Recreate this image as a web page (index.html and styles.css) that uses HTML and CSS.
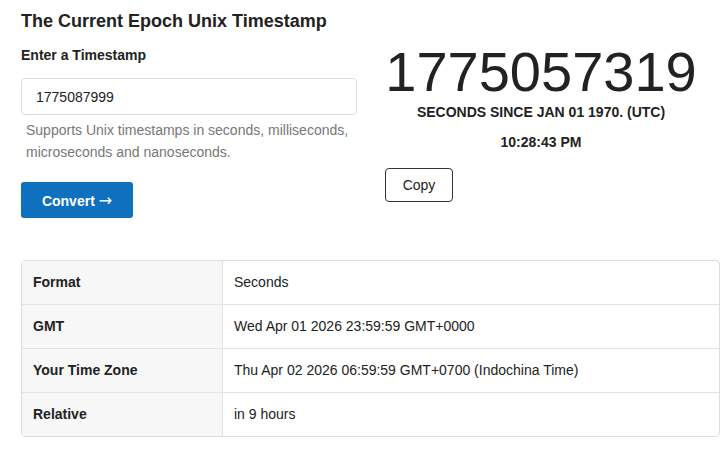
FILE: index.html
```html
<!DOCTYPE html>
<html lang="en">
<head>
  <meta charset="UTF-8" />
  <meta name="viewport" content="width=device-width, initial-scale=1.0"/>
  <title>Epoch Converter</title>
  <link rel="stylesheet" href="styles.css">
</head>
<body>
  <div class="page">
    <div class="top">
      <div class="converter">
        <h1>The Current Epoch Unix Timestamp</h1>
        <label class="label" for="ts">Enter a Timestamp</label>
        <input class="ts-input" id="ts" type="text" value="1775087999">
        <p class="help">Supports Unix timestamps in seconds, milliseconds, microseconds and nanoseconds.</p>
        <button class="convert">Convert <span class="arrow">&rarr;</span></button>
      </div>

      <div class="now">
        <div class="epoch">1775057319</div>
        <div class="since">SECONDS SINCE JAN 01 1970. (UTC)</div>
        <div class="clock">10:28:43 PM</div>
        <button class="copy">Copy</button>
      </div>
    </div>

    <table class="result">
      <tr>
        <th>Format</th>
        <td>Seconds</td>
      </tr>
      <tr>
        <th>GMT</th>
        <td>Wed Apr 01 2026 23:59:59 GMT+0000</td>
      </tr>
      <tr>
        <th>Your Time Zone</th>
        <td>Thu Apr 02 2026 06:59:59 GMT+0700 (Indochina Time)</td>
      </tr>
      <tr>
        <th>Relative</th>
        <td>in 9 hours</td>
      </tr>
    </table>
  </div>
</body>
</html>
```

FILE: styles.css
```css
* {
  box-sizing: border-box;
  font-family: 'Liberation Sans', Arial, sans-serif;
}
body {
  margin: 0;
  background: #fff;
  color: #222;
}
.page {
  padding: 10px 4px 0 21px;
}
.top {
  display: flex;
  gap: 28px;
}
.converter {
  width: 336px;
}
h1 {
  font-size: 18px;
  margin: 0 0 14px 0;
  line-height: 22px;
}
.label {
  display: block;
  font-size: 14px;
  font-weight: bold;
  line-height: 18px;
  margin-bottom: 14px;
}
.ts-input {
  display: block;
  width: 100%;
  height: 37px;
  padding: 0 14px;
  font-size: 14px;
  color: #222;
  border: 1px solid #ddd;
  border-radius: 4px;
}
.help {
  margin: 4px 0 19px 5px;
  font-size: 14px;
  line-height: 22px;
  color: #777;
}
.convert {
  width: 112px;
  height: 36px;
  background: #0f70bd;
  color: #fff;
  font-size: 14px;
  font-weight: bold;
  border: none;
  border-radius: 3px;
  cursor: pointer;
}
.arrow {
  font-family: 'DejaVu Sans', sans-serif;
  font-weight: normal;
  font-size: 16px;
}
.now {
  width: 312px;
  padding-top: 34px;
}
.epoch {
  text-align: center;
  font-size: 56px;
  line-height: 56px;
  color: #222;
}
.since, .clock {
  text-align: center;
  font-size: 14px;
  font-weight: bold;
}
.since {
  margin-top: 4px;
}
.clock {
  margin-top: 14px;
}
.copy {
  margin-top: 18px;
  width: 68px;
  height: 34px;
  background: #fff;
  border: 1px solid #333;
  border-radius: 4px;
  font-size: 14px;
  color: #222;
  cursor: pointer;
}
.result {
  margin-top: 42px;
  width: 699px;
  border-collapse: separate;
  border-spacing: 0;
  border: 1px solid #ddd;
  border-radius: 4px;
  font-size: 14px;
}
.result th, .result td {
  height: 44px;
  padding: 0 11px 2px 11px;
  text-align: left;
  border-bottom: 1px solid #e3e3e3;
}
.result tr:last-child th, .result tr:last-child td {
  height: 43px;
  border-bottom: none;
}
.result th {
  width: 201px;
  background: #f7f7f7;
  border-right: 1px solid #e3e3e3;
}
.result td {
  font-weight: normal;
}
```
